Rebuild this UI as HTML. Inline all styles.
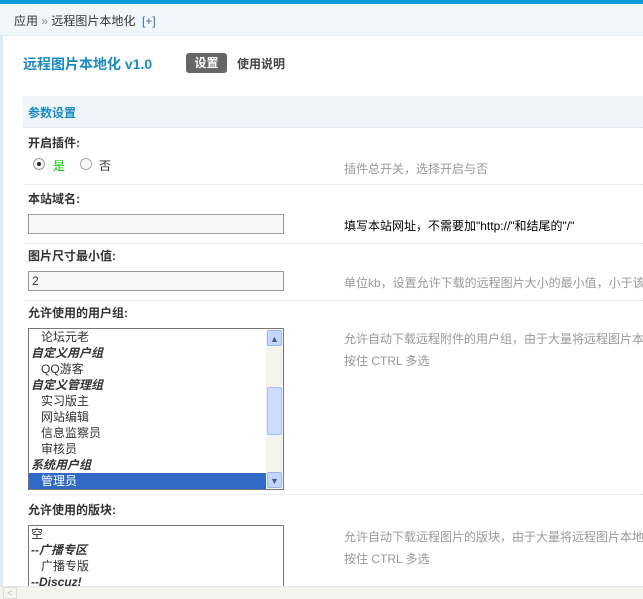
<!DOCTYPE html>
<html><head><meta charset="utf-8"><style>
*{margin:0;padding:0;box-sizing:border-box}
html,body{width:643px;height:599px;overflow:hidden}
body{background:#fff;font:12px "Liberation Sans","Noto Sans CJK SC",sans-serif;color:#333;position:relative}
.abs{position:absolute;white-space:nowrap}
.b{font-weight:bold}
.tip{color:#999;left:344px}
.dot{position:absolute;left:24px;right:0;border-top:1px dotted #ddd;height:0}
.sel{position:absolute;left:28px;width:256px;border:1px solid #777;background:#fff;overflow:hidden}
.sel div{height:16px;line-height:16px;padding-left:12px;font-size:12px;white-space:nowrap}
.sel .g{padding-left:2px;font-weight:bold;font-style:italic}
</style></head><body>
<div class="abs" style="left:0;top:0;width:643px;height:4px;background:#0a9bd6"></div>
<div class="abs" style="left:0;top:4px;width:643px;height:32px;background:#f0f7fb;border-bottom:1px solid #e2eef6"></div>
<div class="abs" style="left:0;top:36px;width:3px;height:552px;background:#d9ebf7"></div>
<div class="abs" style="left:14px;top:12px;font-size:12px;color:#333">应用 <span style="color:#888">»</span> 远程图片本地化 &nbsp;<span style="color:#3a6ea5">[+]</span></div>
<div class="abs b" style="left:23px;top:54px;font-size:14px;color:#1a8ac4">远程图片本地化 v1.0</div>
<div class="abs b" style="left:186px;top:53px;width:41px;height:20px;background:#666;color:#fff;border-radius:3px;text-align:center;line-height:20px">设置</div>
<div class="abs b" style="left:237px;top:55px;color:#444">使用说明</div>
<div class="abs" style="left:23px;top:96px;width:620px;height:32px;background:#eef5fb;border-bottom:1px dotted #dde"></div>
<div class="abs b" style="left:28px;top:104px;color:#1a8ac4">参数设置</div>

<div class="abs b" style="left:28px;top:134px">开启插件:</div>
<div class="abs" style="left:33px;top:158px;width:12px;height:12px;border:1px solid #999;border-radius:50%;background:#f4f4f4"><div style="position:absolute;left:3px;top:3px;width:4px;height:4px;border-radius:50%;background:#222"></div></div>
<div class="abs" style="left:53px;top:157px;color:#0c0">是</div>
<div class="abs" style="left:80px;top:158px;width:12px;height:12px;border:1px solid #aaa;border-radius:50%;background:#f8f8f8"></div>
<div class="abs" style="left:99px;top:157px">否</div>
<div class="abs tip" style="top:160px">插件总开关，选择开启与否</div>
<div class="dot" style="top:184px"></div>

<div class="abs b" style="left:28px;top:190px">本站域名:</div>
<div class="abs" style="left:28px;top:214px;width:256px;height:20px;border:1px solid #999;background:#f8f8f8"></div>
<div class="abs" style="left:344px;top:217px;color:#000">填写本站网址，不需要加"http://"和结尾的"/"</div>
<div class="dot" style="top:243px"></div>

<div class="abs b" style="left:28px;top:247px">图片尺寸最小值:</div>
<div class="abs" style="left:28px;top:271px;width:256px;height:20px;border:1px solid #999;background:#f8f8f8;padding-left:3px;line-height:18px">2</div>
<div class="abs tip" style="top:274px">单位kb，设置允许下载的远程图片大小的最小值，小于该</div>
<div class="dot" style="top:300px"></div>

<div class="abs b" style="left:28px;top:304px">允许使用的用户组:</div>
<div class="sel" style="top:328px;height:162px">
<div>论坛元老</div><div class="g">自定义用户组</div><div>QQ游客</div><div class="g">自定义管理组</div><div>实习版主</div><div>网站编辑</div><div>信息监察员</div><div>审核员</div><div class="g">系统用户组</div><div style="background:#316ac5;color:#fff;width:238px">管理员</div>
<div style="position:absolute;right:0;top:0;width:17px;height:160px;background:#f4f4ee;padding:0">
<div style="position:absolute;left:1px;top:1px;width:15px;height:16px;background:#c4d6fa;border:1px solid #9db5e8;border-radius:2px;font-size:9px;text-align:center;color:#4d6185;padding:0">▲</div>
<div style="position:absolute;left:1px;top:58px;width:15px;height:48px;background:#cddcfb;border:1px solid #a8bfee;border-radius:2px;padding:0"></div>
<div style="position:absolute;left:1px;top:143px;width:15px;height:16px;background:#c4d6fa;border:1px solid #9db5e8;border-radius:2px;font-size:9px;text-align:center;color:#4d6185;padding:0">▼</div>
</div></div>
<div class="abs tip" style="top:330px">允许自动下载远程附件的用户组，由于大量将远程图片本</div>
<div class="abs tip" style="top:352px">按住 CTRL 多选</div>
<div class="dot" style="top:494px"></div>

<div class="abs b" style="left:28px;top:501px">允许使用的版块:</div>
<div class="sel" style="top:525px;height:62px;border-bottom:none">
<div style="padding-left:2px">空</div><div class="g">--广播专区</div><div>广播专版</div><div class="g">--Discuz!</div></div>
<div class="abs tip" style="top:528px">允许自动下载远程图片的版块，由于大量将远程图片本地</div>
<div class="abs tip" style="top:550px">按住 CTRL 多选</div>

<div class="abs" style="left:0;top:586px;width:643px;height:13px;background:#f5f5f0;border-top:1px solid #e6e6e0;z-index:5"></div>
<div class="abs" style="left:3px;top:587px;width:14px;height:12px;border:1px solid #ddd;color:#bbb;font-size:9px;line-height:11px;text-align:center;z-index:6">&lt;</div>
</body></html>
